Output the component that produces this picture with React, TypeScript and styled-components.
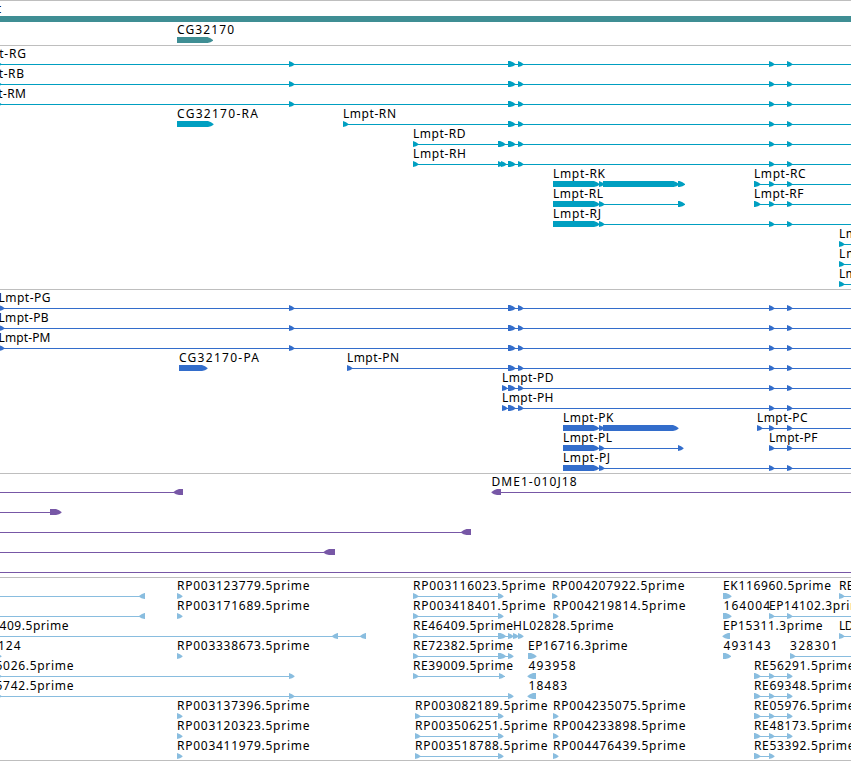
import React from "react";
import styled, { createGlobalStyle } from "styled-components";

const GlobalStyle = createGlobalStyle`
  html, body { margin: 0; background: #fff; overflow: hidden; }
`;

const Browser = styled.main`
  display: flex;
  flex-direction: column;
  width: 851px;
  height: 761px;
  overflow: hidden;
  background: #fff;
`;

const Track = styled.section<{ $color: string; $end: number }>`
  display: flex;
  flex-direction: column;
  border-top: 1px solid #bebebe;
  padding-bottom: ${(p) => p.$end}px;
  color: ${(p) => p.$color};
`;

const Baseline = styled.hr`
  width: 100%;
  height: 1px;
  margin: 0;
  border: 0;
  background: #bebebe;
`;

const Lane = styled.svg<{ $height: number }>`
  display: block;
  flex: none;
  width: 851px;
  height: ${(p) => p.$height}px;
  overflow: visible;
  fill: currentColor;
`;

const Label = styled.text`
  fill: #000;
  font-family: "Noto Sans", "DejaVu Sans", sans-serif;
  font-size: 12px;
  white-space: pre;
`;

// [start, end] points right, [start, end, -1] points left, [start, end, 0] is blunt.
type Exon = [number, number, number?];
type Name = [number, string, number];
interface LaneData {
  names?: Name[];
  lines?: [number, number][];
  exons?: Exon[];
}
interface TrackData {
  id: string;
  color: string;
  pitch: number;
  end: number;
  lanes: LaneData[];
}

function exonPoints([a, b, dir = 1]: Exon) {
  if (dir === 0) return `${a},15 ${b},15 ${b},21 ${a},21`;
  const tip = Math.min(5.5, b - a);
  const shoulder = tip * 0.45;
  if (dir < 0) {
    return `${b},15 ${a + tip},15 ${a + shoulder},16.2 ${a},18 ${a},18.7 ${a + shoulder},20.2 ${a + tip},21 ${b},21`;
  }
  return `${a},15 ${b - tip},15 ${b - shoulder},16.2 ${b},18 ${b},18.7 ${b - shoulder},20.2 ${b - tip},21 ${a},21`;
}

const R = 851;
const tail: Exon[] = [[769, 774.5], [787, 792.5]];
const mid: Exon[] = [[508, 515.5], [518, 523.5]];
const full: Exon[] = [[289, 294.5], ...mid, ...tail];
const est = (n: string, x = 177): Name => [x, n, 133];
const at = (x: number): Exon => [x, x + 5.5];

const tracks: TrackData[] = [
  {
    id: "genes",
    color: "#3f8e94",
    pitch: 21,
    end: 2,
    lanes: [
      { names: [[-29.5, "Lmpt", 31]], exons: [[0, R, 0]] },
      { names: [[177, "CG32170", 57.5]], exons: [[177, 213]] },
    ],
  },
  {
    id: "transcripts",
    color: "#009fc1",
    pitch: 20,
    end: 3,
    lanes: [
      ...["Lmpt-RG", "Lmpt-RB", "Lmpt-RM"].map((n, i): LaneData => ({
        names: [[-28, n, i === 1 ? 52.5 : 54.5]],
        lines: [[0, R]],
        exons: [[-4, 1.5], ...full],
      })),
      {
        names: [[177, "CG32170-RA", 81.5], [343, "Lmpt-RN", 53.5]],
        lines: [[343, R]],
        exons: [[177, 213.5], at(343), ...mid, ...tail],
      },
      { names: [[413, "Lmpt-RD", 53]], lines: [[413, R]], exons: [at(413), [498, 505.5], ...mid, ...tail] },
      { names: [[413, "Lmpt-RH", 53.5]], lines: [[413, R]], exons: [at(413), [498, 503], [501, 506.5], ...mid, ...tail] },
      {
        names: [[553, "Lmpt-RK", 52.5], [754, "Lmpt-RC", 52]],
        lines: [[553, 685], [754, R]],
        exons: [[553, 599.5], [599, 604], [603, 679], [678, 685], [754, 760.5], ...tail],
      },
      {
        names: [[553, "Lmpt-RL", 50.5], [754, "Lmpt-RF", 50]],
        lines: [[553, 685], [754, R]],
        exons: [[553, 599.5], at(599), [678, 685], [754, 760.5], ...tail],
      },
      { names: [[553, "Lmpt-RJ", 48.5]], lines: [[553, R]], exons: [[553, 599.5], at(599), ...tail] },
      ...["Lmpt-RE", "Lmpt-RI", "Lmpt-RO"].map((n): LaneData => ({
        names: [[839, n, 51]],
        lines: [[839, R]],
        exons: [at(839)],
      })),
    ],
  },
  {
    id: "proteins",
    color: "#336dcb",
    pitch: 20,
    end: 3,
    lanes: [
      ...["Lmpt-PG", "Lmpt-PB", "Lmpt-PM"].map((n, i): LaneData => ({
        names: [[-1.5, n, i === 1 ? 50.5 : 52.5]],
        lines: [[0, R]],
        exons: [[-1, 4.5], ...full],
      })),
      {
        names: [[179, "CG32170-PA", 80.5], [347, "Lmpt-PN", 52.5]],
        lines: [[347, R]],
        exons: [[179, 207.5], at(347), ...mid, ...tail],
      },
      ...["Lmpt-PD", "Lmpt-PH"].map((n): LaneData => ({
        names: [[502, n, 52]],
        lines: [[502, R]],
        exons: [at(502), ...mid, ...tail],
      })),
      {
        names: [[563, "Lmpt-PK", 51], [757, "Lmpt-PC", 51]],
        lines: [[563, 678], [757, R]],
        exons: [[563, 599], [599, 604], [603, 678.5], at(757), ...tail],
      },
      {
        names: [[563, "Lmpt-PL", 49.5], [769, "Lmpt-PF", 49]],
        lines: [[563, 683], [769, R]],
        exons: [[563, 599], at(599), at(678), ...tail],
      },
      { names: [[563, "Lmpt-PJ", 47.5]], lines: [[563, R]], exons: [[563, 599], at(599), ...tail] },
    ],
  },
  {
    id: "clones",
    color: "#7757a6",
    pitch: 20,
    end: 3,
    lanes: [
      { names: [[491.5, "DME1-010J18", 85.5]], lines: [[0, 183], [492, R]], exons: [[173.5, 183, -1], [491.5, 501, -1]] },
      { lines: [[0, 61]], exons: [[50, 61.5]] },
      { lines: [[0, 470]], exons: [[461, 471, -1]] },
      { lines: [[0, 335]], exons: [[323.5, 335, -1]] },
      { lines: [[0, R]] },
    ],
  },
  {
    id: "ests",
    color: "#89bddf",
    pitch: 20,
    end: 2,
    lanes: [
      {
        names: [est("RP003123779.5prime"), est("RP003116023.5prime", 413), est("RP004207922.5prime", 552), [723, "EK116960.5prime", 108.5], [839, "RE", 15]],
        lines: [[0, 145], [413, 503], [839, R]],
        exons: [[139, 145, -1], at(177), at(413), at(498), at(552), [723, 731.5], at(839)],
      },
      {
        names: [est("RP003171689.5prime"), est("RP003418401.5prime", 413), est("RP004219814.5prime", 553), [723.5, "164004", 47], [769, "EP14102.3prime", 100]],
        lines: [[0, 145], [413, 503], [769, R]],
        exons: [[139, 145, -1], at(177), at(413), at(498), at(553), [723, 731.5], ...tail],
      },
      {
        names: [[-0.5, "409.5prime", 69.5], [413, "RE46409.5prime", 100.5], [513, "HL02828.5prime", 101], [723, "EP15311.3prime", 100], [839, "LD", 15]],
        lines: [[0, 366], [413, 523], [839, R]],
        exons: [[332, 338, -1], [360, 366, -1], at(413), [498, 506], at(508), at(513), at(518), [722.5, 730, -1], at(839)],
      },
      {
        names: [[-2, "124", 23], est("RP003338673.5prime"), [413, "RE72382.5prime", 100.5], [528, "EP16716.3prime", 100], [723.5, "493143", 47.5], [790, "328301", 48]],
        lines: [[413, 513], [790, R]],
        exons: [[-4, 1.5], at(177), at(413), [498, 506], at(508), [528, 536.5], [723, 731], at(790)],
      },
      {
        names: [[-4.5, "5026.5prime", 78.5], [413, "RE39009.5prime", 100.5], [528.5, "493958", 47.5], [754, "RE56291.5prime", 101]],
        lines: [[0, 294], [413, 505], [754, 792]],
        exons: [[-4, 1.5], at(289), at(413), at(499), [527.5, 536, -1], [754, 760.5], ...tail],
      },
      {
        names: [[-4.5, "5742.5prime", 78.5], [528.5, "18483", 39], [754, "RE69348.5prime", 101]],
        lines: [[0, 513], [754, 792]],
        exons: [[-4, 1.5], at(289), at(508), [527.5, 536, -1], [754, 760.5], ...tail],
      },
      ...[
        ["RP003137396.5prime", "RP003082189.5prime", "RP004235075.5prime", "RE05976.5prime"],
        ["RP003120323.5prime", "RP003506251.5prime", "RP004233898.5prime", "RE48173.5prime"],
        ["RP003411979.5prime", "RP003518788.5prime", "RP004476439.5prime", "RE53392.5prime"],
      ].map(([a, b, c, d], i): LaneData => ({
        names: [est(a), est(b, 415), est(c, 553), [754, d, 101]],
        lines: [[415, 503], [754, i === 2 ? 774 : 792]],
        exons: [at(177), at(415), at(498), at(553), [754, 760.5], ...(i === 2 ? tail.slice(0, 1) : tail)],
      })),
    ],
  },
];

function FeatureLane({ lane, height }: { lane: LaneData; height: number }) {
  return (
    <Lane $height={height}>
      {lane.lines?.map(([a, b]) => <rect key={a} x={a} y={18} width={b - a} height={1} />)}
      {lane.exons?.map((e) => <polygon key={e[0]} points={exonPoints(e)} />)}
      {lane.names?.map(([x, name, length]) => (
        <Label key={x} x={x} y={12} textLength={length - 0.5}>{name}</Label>
      ))}
    </Lane>
  );
}

export default function App() {
  return (
    <>
      <GlobalStyle />
      <Browser>
        {tracks.map((t) => (
          <Track key={t.id} $color={t.color} $end={t.end}>
            {t.lanes.map((lane, i) => <FeatureLane key={i} lane={lane} height={t.pitch} />)}
          </Track>
        ))}
        <Baseline />
      </Browser>
    </>
  );
}
